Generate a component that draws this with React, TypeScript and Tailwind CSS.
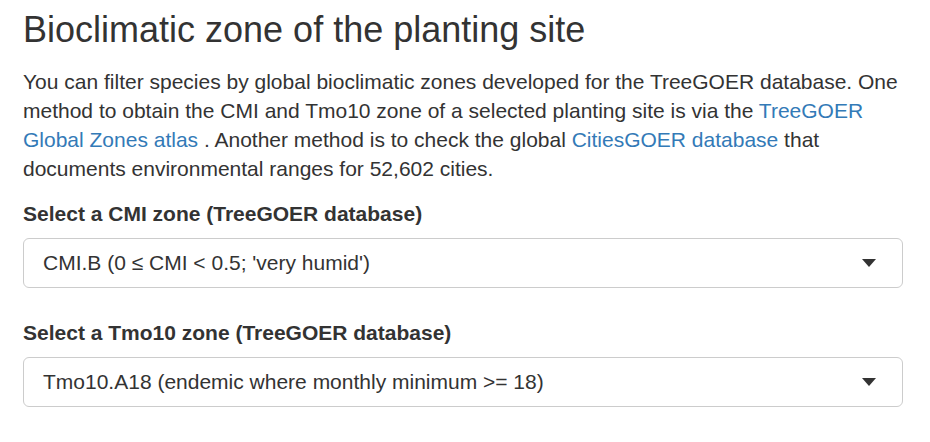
import React from 'react';

interface ZoneSelectProps {
  label: string;
  value: string;
}

const ZoneSelect: React.FC<ZoneSelectProps> = ({ label, value }) => {
  return (
    <div className="mb-[31px]">
      <label className="block text-[21px] font-bold leading-[28px] mb-[10px]">{label}</label>
      <div className="flex items-center justify-between h-[50px] border border-[#cccccc] rounded-[6px] bg-white pl-[19px] pr-[26px] text-[21px]">
        <span>{value}</span>
        {/* caret */}
        <svg width="14" height="8" viewBox="0 0 14 8" className="fill-[#333]">
          <path d="M0 0h14L7 8z" />
        </svg>
      </div>
    </div>
  );
};

export default function App() {
  return (
    <div className="w-[930px] h-[442px] bg-white text-[#333333] font-['Liberation_Sans',Arial,sans-serif] pl-[23px] pr-[27px]">
      <h3 className="text-[36px] leading-[1.1] font-normal pt-[10px] mb-[17px]">Bioclimatic zone of the planting site</h3>

      <p className="text-[21px] leading-[29px] mb-[17px]">
        You can filter species by global bioclimatic zones developed for the TreeGOER database. One method to
        obtain the CMI and Tmo10 zone of a selected planting site is via the{' '}
        <a href="#" className="text-[#337ab7]">TreeGOER Global Zones atlas</a> . Another method is to check the
        global <a href="#" className="text-[#337ab7]">CitiesGOER database</a> that documents environmental ranges
        for 52,602 cities.
      </p>

      <ZoneSelect label="Select a CMI zone (TreeGOER database)" value="CMI.B (0 ≤ CMI < 0.5; 'very humid')" />
      <ZoneSelect label="Select a Tmo10 zone (TreeGOER database)" value="Tmo10.A18 (endemic where monthly minimum >= 18)" />
    </div>
  );
}
